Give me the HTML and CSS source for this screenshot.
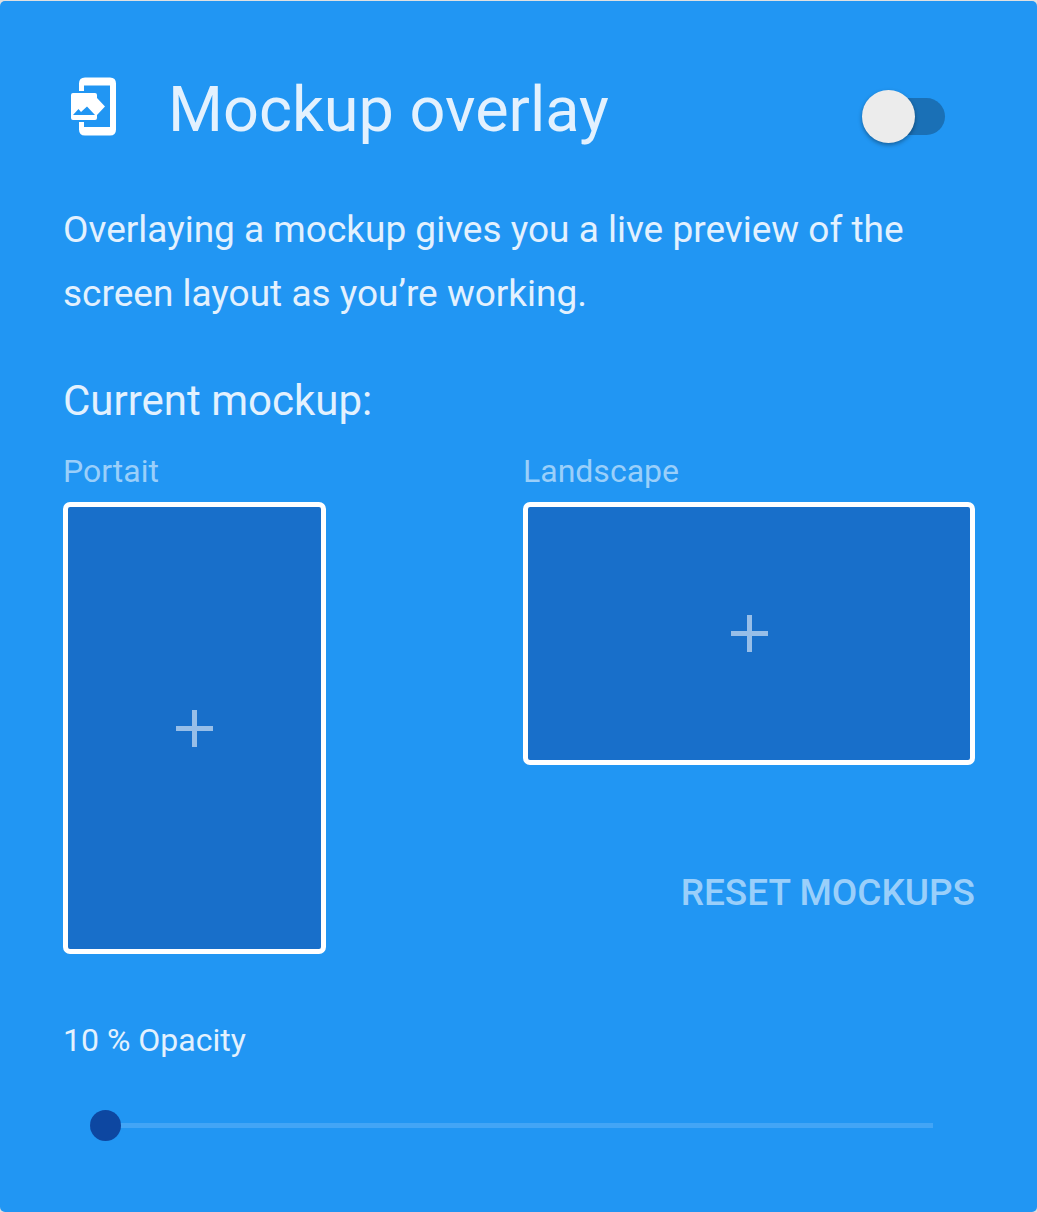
FILE: index.html
```html
<!DOCTYPE html>
<html lang="en">
<head>
<meta charset="utf-8">
<meta name="viewport" content="width=device-width, initial-scale=1">
<title>Mockup overlay</title>
<link rel="stylesheet" href="styles.css">
</head>
<body>
<main class="card">
  <header class="card-header">
    <svg class="card-icon" viewBox="63 75 63 63" aria-hidden="true">
      <path fill="#fff" d="M79 91V83.500Q79 77.500 85 77.500H110Q116 77.500 116 83.500V129.500Q116 135.500 110 135.500H85Q79 135.500 79 129.500V122H84V127H110V85.500H84V91Z"/>
      <path fill="#fff" fill-rule="evenodd" d="M73 93H95Q97 93 97 95V98L105 106.500L97 115V118Q97 120 95 120H73Q71 120 71 118V95Q71 93 73 93ZM73 115H95L87 106.500L81 112L78.500 109Z"/>
    </svg>
    <h1 class="card-title"><label for="overlay">Mockup overlay</label></h1>
    <input class="switch" type="checkbox" role="switch" id="overlay">
  </header>
  <p class="description">Overlaying a mockup gives you a live preview of the screen layout as you’re working.</p>
  <h2 class="section-title">Current mockup:</h2>
  <div class="mockups">
    <section class="mockup">
      <h3 class="mockup-label" id="portrait-label">Portait</h3>
      <button class="picker picker-portrait" type="button" aria-labelledby="portrait-label">
        <svg class="plus" viewBox="0 0 37 37" aria-hidden="true"><path d="M0 18.500H37M18.500 0V37"/></svg>
      </button>
    </section>
    <section class="mockup">
      <h3 class="mockup-label" id="landscape-label">Landscape</h3>
      <button class="picker picker-landscape" type="button" aria-labelledby="landscape-label">
        <svg class="plus" viewBox="0 0 37 37" aria-hidden="true"><path d="M0 18.500H37M18.500 0V37"/></svg>
      </button>
      <button class="reset" type="button">RESET MOCKUPS</button>
    </section>
  </div>
  <label class="opacity-label" for="opacity">10 % Opacity</label>
  <div class="slider-row">
    <input class="slider" type="range" id="opacity" min="10" max="100" value="10">
  </div>
</main>
</body>
</html>
```
FILE: styles.css
```css
* {
  box-sizing: border-box;
}

body {
  margin: 0;
  padding-top: 1px;
  background: #e0e0e0;
  font-family: Roboto, "Liberation Sans", sans-serif;
}

.card {
  padding: 71px 62px 71px 63px;
  border-radius: 5px;
  background: #2196f3;
  color: #e3f1fe;
}

.card-header {
  display: flex;
  align-items: flex-start;
  min-height: 76px;
}

.card-icon {
  flex: none;
  width: 63px;
  height: 63px;
  margin-top: 3px;
}

.card-title {
  flex: 1;
  margin: 0 0 0 42px;
  font-size: 63px;
  font-weight: 400;
  line-height: 76px;
}

.switch {
  appearance: none;
  position: relative;
  flex: none;
  align-self: flex-end;
  width: 83px;
  height: 53px;
  margin: 0 30px 5px 0;
}

.switch::before {
  content: "";
  position: absolute;
  inset: 8px 0 8px 8px;
  border-radius: 19px;
  background: #1a70b6;
}

.switch::after {
  content: "";
  position: absolute;
  top: 0;
  left: 0;
  width: 53px;
  height: 53px;
  border-radius: 50%;
  background: #ececec;
  box-shadow: 0 2px 4px rgba(0, 0, 0, 0.35);
}

.switch:checked::after {
  left: 30px;
}

.description {
  margin: 50px 0 47px;
  font-size: 37px;
  line-height: 64px;
}

.section-title {
  margin: 0 0 22px;
  font-size: 42px;
  font-weight: 400;
  line-height: 56px;
}

.mockups {
  display: grid;
  grid-template-columns: minmax(0, 263fr) minmax(0, 452fr);
  column-gap: 197px;
}

.mockup {
  display: flex;
  flex-direction: column;
}

.mockup-label {
  margin: 0 0 11px;
  color: #9acffa;
  font-size: 32px;
  font-weight: 400;
  line-height: 40px;
}

.picker {
  display: flex;
  align-items: center;
  justify-content: center;
  width: 100%;
  padding: 0;
  border: 5px solid #fff;
  border-radius: 7px;
  background: #186fca;
}

.picker-portrait {
  aspect-ratio: 263 / 452;
}

.picker-landscape {
  aspect-ratio: 452 / 263;
}

.plus {
  width: 37px;
  height: 37px;
  fill: none;
  stroke: #97bee8;
  stroke-width: 5px;
}

.reset {
  align-self: flex-end;
  margin: auto 0 37px;
  padding: 0;
  border: 0;
  background: none;
  color: #9acffa;
  font-family: inherit;
  font-size: 37px;
  font-weight: 500;
  line-height: 48px;
}

.opacity-label {
  display: block;
  margin: 66px 0 50px;
  font-size: 32px;
  line-height: 40px;
}

.slider-row {
  display: flex;
  padding: 0 42px 0 27px;
}

.slider {
  appearance: none;
  width: 100%;
  height: 31px;
  margin: 0;
  background: none;
}

.slider::-webkit-slider-runnable-track {
  height: 5px;
  background: #42a5f6;
}

.slider::-webkit-slider-thumb {
  appearance: none;
  width: 31px;
  height: 31px;
  margin-top: -13px;
  border-radius: 50%;
  background: #0d47a1;
}
```
